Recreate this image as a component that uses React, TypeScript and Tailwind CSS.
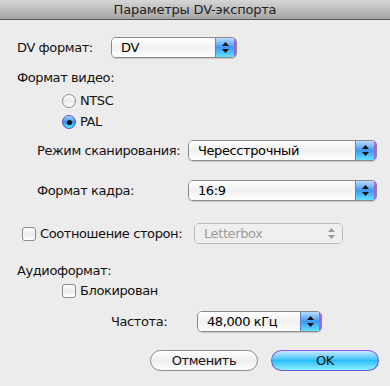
import React from 'react';

const FONT = { fontFamily: '"Lucida Grande", "DejaVu Sans", "Noto Sans", sans-serif' };

const Arrows = ({ dim }: { dim?: boolean }) => (
  <svg width="7" height="11" viewBox="0 0 7 11">
    <polygon points="3.5,0 7,4 0,4" fill={dim ? '#9a9a9a' : '#111'} />
    <polygon points="0,7 7,7 3.5,11" fill={dim ? '#9a9a9a' : '#111'} />
  </svg>
);

const Popup = ({ value, width, disabled }: { value: string; width: string; disabled?: boolean }) => (
  <div
    className={`${width} h-[21px] flex rounded-[5px] border overflow-hidden ${
      disabled ? 'border-[#b9b9b9] bg-[#f1f1f1]' : 'border-[#8a8a8a] shadow-[0_1px_1px_rgba(0,0,0,0.15)]'
    }`}
  >
    <div
      className={`flex-1 flex items-center pl-[9px] text-[13px] ${
        disabled
          ? 'text-[#9c9c9c] bg-[#efefef]'
          : 'text-black bg-gradient-to-b from-[#ffffff] via-[#f1f1f1] to-[#fdfdfd]'
      }`}
    >
      {value}
    </div>
    <div
      className={`w-[21px] flex items-center justify-center ${
        disabled
          ? 'bg-[#efefef]'
          : 'bg-gradient-to-b from-[#b9dcff] via-[#3d98f2] to-[#62e2ff] border-l border-[#5a7fd6] border-r-2 border-r-[#9a62f0]'
      }`}
    >
      <Arrows dim={disabled} />
    </div>
  </div>
);

const Radio = ({ checked }: { checked?: boolean }) =>
  checked ? (
    <div className="w-[14px] h-[14px] rounded-full border border-[#4a52c8] bg-gradient-to-b from-[#a8d8ff] via-[#2a90f0] to-[#60e8ff] flex items-center justify-center">
      <div className="w-[5px] h-[5px] rounded-full bg-[#111]" />
    </div>
  ) : (
    <div className="w-[14px] h-[14px] rounded-full border border-[#8c8c8c] bg-gradient-to-b from-[#ffffff] via-[#e9e9e9] to-[#ffffff]" />
  );

const Checkbox = () => (
  <div className="w-[14px] h-[14px] rounded-[3px] border border-[#8c8c8c] bg-gradient-to-b from-[#ffffff] via-[#ececec] to-[#ffffff]" />
);

export default function App() {
  return (
    <div className="w-[390px] h-[386px] bg-[#ececec] text-[13px] tracking-[-0.4px] text-[#111] flex flex-col" style={FONT}>
      <div className="h-[20px] shrink-0 border-b border-[#575757] bg-gradient-to-b from-[#d6d6d6] to-[#a6a6a6] flex items-center justify-center text-[13px] tracking-[-0.2px] text-[#222]">
        Параметры DV-экспорта
      </div>

      <div className="flex items-center mt-[17px] pl-[17px]">
        <span className="w-[94px]">DV формат:</span>
        <Popup value="DV" width="w-[126px]" />
      </div>

      <div className="mt-[12px] pl-[17px] h-[16px] flex items-center">Формат видео:</div>

      <div className="mt-[7px] pl-[62px] h-[16px] flex items-center gap-[4px]">
        <Radio />
        <span>NTSC</span>
      </div>
      <div className="mt-[5px] pl-[62px] h-[16px] flex items-center gap-[4px]">
        <Radio checked />
        <span>PAL</span>
      </div>

      <div className="flex items-center mt-[10px] pl-[37px]">
        <span className="w-[151px]">Режим сканирования:</span>
        <Popup value="Чересстрочный" width="w-[189px]" />
      </div>

      <div className="flex items-center mt-[19px] pl-[37px]">
        <span className="w-[151px]">Формат кадра:</span>
        <Popup value="16:9" width="w-[189px]" />
      </div>

      <div className="flex items-center mt-[22px] pl-[22px]">
        <Checkbox />
        <span className="ml-[4px] w-[154px]">Соотношение сторон:</span>
        <Popup value="Letterbox" width="w-[149px]" disabled />
      </div>

      <div className="mt-[19px] pl-[17px] h-[16px] flex items-center">Аудиоформат:</div>

      <div className="mt-[4px] pl-[62px] h-[16px] flex items-center gap-[4px]">
        <Checkbox />
        <span>Блокирован</span>
      </div>

      <div className="flex items-center mt-[12px] pl-[111px]">
        <span className="w-[86px]">Частота:</span>
        <Popup value="48,000 кГц" width="w-[125px]" />
      </div>

      <div className="flex items-center mt-[18px] pl-[150px] gap-[13px]">
        <button className="w-[108px] h-[21px] rounded-full border border-[#8a8a8a] bg-gradient-to-b from-[#ffffff] via-[#eeeeee] to-[#fdfdfd] text-[13px] flex items-center justify-center">
          Отменить
        </button>
        <button className="w-[108px] h-[21px] rounded-full border border-[#6a5ad8] border-t-[#9a4ff0] bg-gradient-to-b from-[#c0ecff] via-[#28bdf6] to-[#86f0ff] text-[13px] flex items-center justify-center">
          OK
        </button>
      </div>
    </div>
  );
}
